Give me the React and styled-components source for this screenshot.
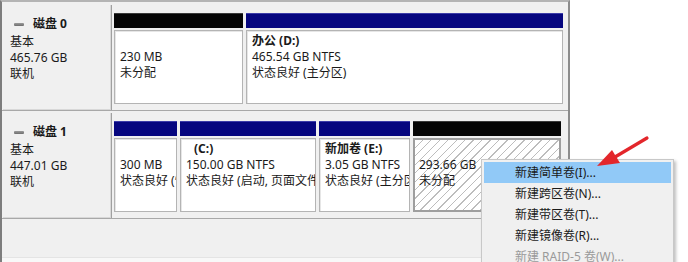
import React from "react";
import styled, { createGlobalStyle, css } from "styled-components";

const Global = createGlobalStyle`
  html, body { margin: 0; padding: 0; background: #ffffff; overflow: hidden; }
  body { font-family: "Noto Sans", "Noto Sans CJK SC", sans-serif; font-size: 12px; color: #1a1a1a; }
`;

const Page = styled.div`
  position: relative;
  width: 688px;
  height: 262px;
  overflow: hidden;
  background: #ffffff;
`;

const Frame = styled.div`
  box-sizing: border-box;
  width: 570px;
  height: 262px;
  background: #f0f0f0;
  border-left: 2px solid #7d7d7d;
  border-right: 2px solid #8c8c8c;
  border-top: 2px solid #b4b4b4;
  padding-top: 3px;
  display: flex;
  flex-direction: column;
`;

const DiskRow = styled.div`
  display: flex;
  height: 105px;
  flex: none;
  border-bottom: 1px solid #a8a8a8;
  margin-bottom: 2px;
`;

const LabelPanel = styled.div`
  box-sizing: border-box;
  width: 109px;
  margin-left: 1px;
  height: 100%;
  background: #f0f0f0;
  border-right: 1px solid #a0a0a0;
  box-shadow: inset -1px -1px 0 #d8d8d8;
  padding: 11px 0 0 7px;
  line-height: 16px;
`;

const DiskName = styled.div`
  display: flex;
  align-items: center;
  font-weight: 700;
  margin-bottom: 2px;
`;

const DiskIcon = styled.span`
  display: inline-block;
  width: 10px;
  height: 3px;
  margin: 0 9px 0 4px;
  background: linear-gradient(#9a9a9a, #6e6e6e);
  border-radius: 1px;
`;

const Partitions = styled.div`
  display: flex;
  gap: 3px;
  padding: 8px 0 0 2px;
`;

const Column = styled.div`
  display: flex;
  flex-direction: column;
  width: ${(p) => p.$w}px;
`;

const Bar = styled.div`
  height: 15px;
  background: ${(p) => (p.$black ? "#050505" : "#06067f")};
  box-shadow: inset 0 1px 0 ${(p) => (p.$black ? "#3a3a3a" : "#3c3ca8")};
`;

const Body = styled.div`
  box-sizing: border-box;
  margin-top: 2px;
  height: 74px;
  background: #ffffff;
  border: 1px solid #b4b4b4;
  box-shadow: inset 1px 1px 0 #e6e6e6;
  padding: 2px 0 0 5px;
  line-height: 16px;
  white-space: nowrap;
  overflow: hidden;
  ${(p) =>
    p.$hatched &&
    css`
      border: 2px solid #9e9e9e;
      padding: 1px 0 0 4px;
      box-shadow: none;
      background: repeating-linear-gradient(
        135deg,
        #ffffff 0px,
        #ffffff 5px,
        #bdbdbd 5px,
        #bdbdbd 6px
      );
    `}
`;

const Name = styled.div`
  font-weight: 700;
  height: 16px;
  padding-left: ${(p) => p.$indent || 0}px;
`;

const Legend = styled.div`
  margin-top: auto;
  height: 4px;
  background: #f8f8f8;
  border-top: 1px solid #e4e4e4;
`;

const Menu = styled.div`
  position: absolute;
  left: 481px;
  top: 159px;
  width: 193px;
  box-sizing: border-box;
  background: #f0f0f0;
  border: 1px solid #c8c8c8;
  box-shadow: 2px 2px 3px rgba(0, 0, 0, 0.25);
  padding: 2px;
`;

const MenuItem = styled.div`
  height: 21px;
  line-height: 21px;
  padding-left: 31px;
  color: ${(p) => (p.$disabled ? "#9a9a9a" : "#1a1a1a")};
  background: ${(p) => (p.$active ? "#91c9f7" : "transparent")};
`;

const Arrow = styled.svg`
  position: absolute;
  left: 590px;
  top: 130px;
`;

const disks = [
  {
    name: "磁盘 0",
    size: "465.76 GB",
    parts: [
      { w: 129, black: true, lines: ["230 MB", "未分配"] },
      { w: 317, name: "办公  (D:)", lines: ["465.54 GB NTFS", "状态良好 (主分区)"] },
    ],
  },
  {
    name: "磁盘 1",
    size: "447.01 GB",
    parts: [
      { w: 63, lines: ["300 MB", "状态良好 (恢复分区)"] },
      { w: 136, name: "(C:)", indent: 8, lines: ["150.00 GB NTFS", "状态良好 (启动, 页面文件, 故障转储, 主分区)"] },
      { w: 91, name: "新加卷  (E:)", lines: ["3.05 GB NTFS", "状态良好 (主分区)"] },
      { w: 148, black: true, hatched: true, lines: ["293.66 GB", "未分配"] },
    ],
  },
];

const menuItems = [
  { t: "新建简单卷(I)...", active: true },
  { t: "新建跨区卷(N)..." },
  { t: "新建带区卷(T)..." },
  { t: "新建镜像卷(R)..." },
  { t: "新建 RAID-5 卷(W)...", disabled: true },
];

export default function App() {
  return (
    <Page>
      <Global />
      <Frame>
        {disks.map((d) => (
          <DiskRow key={d.name}>
            <LabelPanel>
              <DiskName>
                <DiskIcon />
                {d.name}
              </DiskName>
              <div>基本</div>
              <div>{d.size}</div>
              <div>联机</div>
            </LabelPanel>
            <Partitions>
              {d.parts.map((p, i) => (
                <Column key={i} $w={p.w}>
                  <Bar $black={p.black} />
                  <Body $hatched={p.hatched}>
                    <Name $indent={p.indent}>{p.name || ""}</Name>
                    {p.lines.map((l) => (
                      <div key={l}>{l}</div>
                    ))}
                  </Body>
                </Column>
              ))}
            </Partitions>
          </DiskRow>
        ))}
        <Legend />
      </Frame>
      <Menu>
        {menuItems.map((m) => (
          <MenuItem key={m.t} $active={m.active} $disabled={m.disabled}>
            {m.t}
          </MenuItem>
        ))}
      </Menu>
      <Arrow width="70" height="45" viewBox="0 0 70 45">
        <line x1="57" y1="8" x2="25" y2="27" stroke="#e3262b" strokeWidth="3.2" strokeLinecap="round" />
        <polygon points="7,36 22,20 30,33" fill="#e3262b" />
      </Arrow>
    </Page>
  );
}
